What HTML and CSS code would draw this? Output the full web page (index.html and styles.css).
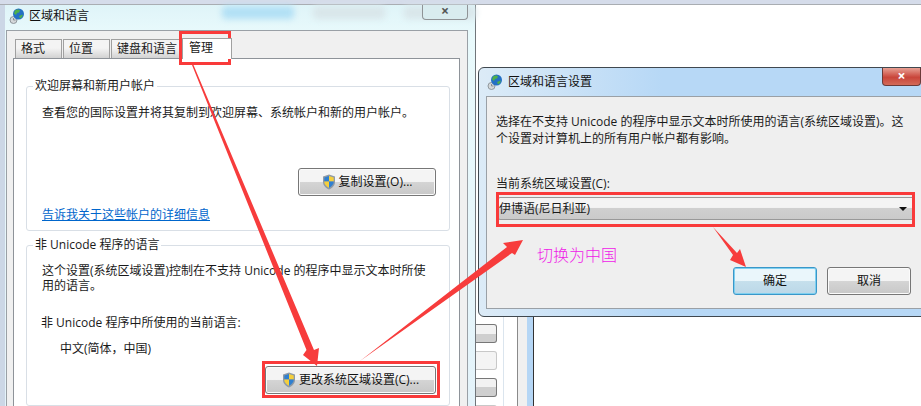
FILE: index.html
```html
<!DOCTYPE html>
<html lang="zh-CN">

<head>
  <meta charset="UTF-8">
  <meta name="viewport" content="width=device-width, initial-scale=1.0">
  <title>区域和语言</title>
  <link rel="stylesheet" href="styles.css">
</head>

<body>
  <svg width="0" height="0" class="defs">
    <defs>
      <symbol id="shield" viewBox="0 0 14 16">
        <path d="M7 .5 13 2.500V8c0 3.500-2.800 6-6 7.500C3.800 14 1 11.500 1 8V2.500Z" fill="#8f9aa6" />
        <path d="M7 2 2.300 3.500V7.500H7Z" fill="#2f7fd0" />
        <path d="M7 2 11.700 3.500V7.500H7Z" fill="#f5cf3c" />
        <path d="M2.300 7.500H7V13.800C4.500 12.500 2.300 10.500 2.300 8Z" fill="#f5cf3c" />
        <path d="M11.700 7.500H7V13.800C9.500 12.500 11.700 10.500 11.700 8Z" fill="#2f7fd0" />
      </symbol>
      <symbol id="globe" viewBox="0 0 16 16">
        <circle cx="4.500" cy="12" r="3.500" fill="#d4d8da" stroke="#8f979c" />
        <path d="M4.500 10v2h2" fill="none" stroke="#6d7478" stroke-width=".7" />
        <circle cx="9.500" cy="6" r="5.500" fill="#2470c4" />
        <path d="M6 2.500c2-1.500 4-1.500 5 0l-1 2-2 .5-1 2-2-1.500ZM10 8l3.500-1.500c.5 1-.5 3.500-2.500 4Z" fill="#4fb04a" />
      </symbol>
    </defs>
  </svg>

  <div class="desktop">
    <!-- whatever is behind the two dialogs -->
    <div class="top-band"></div>
    <div class="behind">
      <div class="strip-buttons">
        <div class="stub"></div>
        <div class="stub stub-off"></div>
        <div class="stub"></div>
        <div class="stub stub-off"></div>
      </div>
      <div class="strip-line"></div>
      <div class="strip-edge"></div>
    </div>

    <!-- main dialog -->
    <section class="window window-main">
      <div class="ghost-buttons">
        <span class="ghost ghost-blue"></span>
        <span class="ghost"></span>
        <span class="ghost"></span>
      </div>
      <div class="titlebar">
        <svg class="title-icon"><use href="#globe" /></svg>
        <span class="title-text">区域和语言</span>
        <span class="close close-idle">×</span>
      </div>
      <div class="client">
        <ul class="tabs">
          <li class="tab">格式</li>
          <li class="tab">位置</li>
          <li class="tab">键盘和语言</li>
          <li class="tab tab-active">管理</li>
        </ul>
        <div class="tab-panel">
          <fieldset class="group group-welcome">
            <legend>欢迎屏幕和新用户帐户</legend>
            <p class="group-text">查看您的国际设置并将其复制到欢迎屏幕、系统帐户和新的用户帐户。</p>
            <div class="group-action">
              <button class="btn btn-copy"><svg class="shield"><use href="#shield" /></svg>复制设置(O)...</button>
            </div>
            <a class="link" href="#">告诉我关于这些帐户的详细信息</a>
          </fieldset>
          <fieldset class="group group-unicode">
            <legend>非 Unicode 程序的语言</legend>
            <p class="group-text">这个设置(系统区域设置)控制在不支持 Unicode 的程序中显示文本时所使用的语言。</p>
            <p class="current-label">非 Unicode 程序中所使用的当前语言:</p>
            <p class="current-value">中文(简体，中国)</p>
            <div class="group-action">
              <button class="btn btn-change"><svg class="shield"><use href="#shield" /></svg>更改系统区域设置(C)...</button>
            </div>
          </fieldset>
        </div>
      </div>
    </section>

    <!-- locale dialog -->
    <section class="window window-locale">
      <div class="titlebar">
        <svg class="title-icon"><use href="#globe" /></svg>
        <span class="title-text">区域和语言设置</span>
        <span class="close">×</span>
      </div>
      <div class="client client-locale">
        <p class="locale-text">选择在不支持 Unicode 的程序中显示文本时所使用的语言(系统区域设置)。这个设置对计算机上的所有用户帐户都有影响。</p>
        <label class="locale-label">当前系统区域设置(C):</label>
        <div class="select">
          <span>伊博语(尼日利亚)</span>
          <span class="select-arrow"></span>
        </div>
        <div class="locale-buttons">
          <button class="btn btn-dialog btn-default">确定</button>
          <button class="btn btn-dialog">取消</button>
        </div>
      </div>
    </section>

    <!-- annotations drawn on top of the screenshot -->
    <div class="mark mark-tab"></div>
    <div class="mark mark-button"></div>
    <div class="mark mark-select"></div>
    <div class="note">切换为中国</div>
    <svg class="arrows" width="921" height="406" viewBox="0 0 921 406">
      <path d="M192 65 306.500 350 303 355 317 366 319 348 314 350 193.500 65Z" />
      <path d="M360 361 507 247 503 243 523 240 515 255 512 253Z" />
      <path d="M713 227 733 255 730 260 746 267 740 249 737 253Z" />
    </svg>
  </div>
</body>

</html>
```

FILE: styles.css
```css
/* Basic Reset */
* {
  margin: 0;
  padding: 0;
  box-sizing: border-box;
}

body {
  font-family: 'Open Sans', 'Noto Sans CJK SC', sans-serif;
  font-size: 12px;
  line-height: 16px;
  color: #1a1a1a;
  background-color: #fff;
  overflow: hidden;
}

.defs {
  position: absolute;
}

.desktop {
  position: relative;
  width: 921px;
  height: 406px;
  overflow: hidden;
  background-color: #fff;
}

/* Stuff behind the dialogs */
.top-band {
  position: absolute;
  left: 0;
  top: 0;
  width: 100%;
  height: 5px;
  background-color: #d5dcea;
  border-bottom: 1px solid #a9adb2;
}

.behind {
  position: absolute;
  left: 476px;
  top: 316px;
  width: 58px;
  height: 90px;
  display: flex;
}

.strip-buttons {
  width: 21px;
  padding-top: 8px;
  display: flex;
  flex-direction: column;
  gap: 8px;
  flex-shrink: 0;
}

.stub {
  height: 19px;
  flex-shrink: 0;
  border: 1px solid #777;
  border-left: none;
  border-radius: 0 3px 3px 0;
  background: linear-gradient(#f2f2f2 50%, #cfcfcf 50%);
}

.stub-off {
  border-color: #c8c8c8;
  background: #f4f4f4;
}

.strip-line {
  margin-left: 6px;
  width: 1px;
  background-color: #dbe5ee;
}

.strip-edge {
  margin-left: 13px;
  width: 17px;
  border-left: 1px solid #8a8a8a;
  border-right: 1px solid #333;
  background: linear-gradient(90deg, #f0f0f0 9px, #b5d6f5 9px);
}

/* Windows */
.window {
  position: absolute;
  display: flex;
  flex-direction: column;
}

.window-main {
  left: 0;
  top: 5px;
  width: 476px;
  height: 401px;
  padding-left: 6px;
  background: linear-gradient(#dff4f8, #e9fafc 30px, #e4f3fa);
  border-right: 1px solid #70757a;
  box-shadow: inset 5px 0 0 #ccd7e6;
}

.window-locale {
  left: 478px;
  top: 67px;
  width: 460px;
  height: 250px;
  padding: 0 0 7px 7px;
  border: 1px solid #40484f;
  border-radius: 6px 0 0 6px;
  background: linear-gradient(90deg, #dcebf7, #b7d8f6 40%);
}

.titlebar {
  display: flex;
  align-items: center;
  height: 25px;
  padding-bottom: 4px;
  flex-shrink: 0;
  gap: 4px;
  padding-left: 3px;
  position: relative;
}

.window-locale .titlebar {
  height: 28px;
  padding-bottom: 0;
  padding-left: 1px;
  gap: 5px;
}

.title-icon {
  width: 16px;
  height: 16px;
}

.title-text {
  font-size: 12px;
  color: #111;
}

.close {
  position: absolute;
  top: 0;
  left: 396px;
  width: 39px;
  height: 18px;
  border: 1px solid #6b3a38;
  border-top: none;
  border-radius: 0 0 4px 4px;
  background: linear-gradient(#e8a093, #c9453a 55%, #d36a58);
  color: #fff;
  font-size: 14px;
  line-height: 15px;
  font-weight: bold;
  text-align: center;
}

.close-idle {
  left: 416px;
  width: 46px;
  height: 15px;
  border-color: #8f9396;
  background: #d9ecef;
  color: #555;
  line-height: 12px;
}

.ghost-buttons {
  position: absolute;
  left: 222px;
  top: 1px;
  display: flex;
  gap: 19px;
}

.ghost {
  width: 72px;
  height: 13px;
  border-radius: 4px;
  background: #d9e6ea;
  filter: blur(3px);
}

.ghost-blue {
  background: #b2e0f5;
}

.client {
  flex: 1;
  background-color: #f0f0f0;
  border: 1px solid #9aa0a6;
  border-bottom: none;
  margin-right: 7px;
  padding: 7px 0 0 6px;
  display: flex;
  flex-direction: column;
  overflow: hidden;
}

/* Tabs */
.tabs {
  list-style: none;
  display: flex;
  padding-left: 2px;
  height: 20px;
  flex-shrink: 0;
  align-items: flex-end;
  gap: 1px;
}

.tab {
  height: 19px;
  padding: 0 3px 0 5px;
  min-width: 47px;
  border: 1px solid #a0a0a0;
  border-bottom: none;
  background: linear-gradient(#f4f4f4 45%, #d2d2d2);
  line-height: 18px;
}

.tab-active {
  height: 21px;
  width: 50px;
  min-width: 0;
  padding-left: 6px;
  margin-bottom: -1px;
  background: #fff;
  position: relative;
  z-index: 1;
  line-height: 17px;
}

.tab-panel {
  flex: 1;
  width: 447px;
  background-color: #fff;
  border: 1px solid #8e9399;
  border-bottom: none;
  padding: 19px 9px 0 12px;
  display: flex;
  flex-direction: column;
  gap: 6px;
}

/* Group boxes */
.group {
  border: 1px solid #d9dfe6;
  border-radius: 3px;
  padding: 0 13px 0 15px;
}

.group legend {
  margin-left: -9px;
  padding: 0 2px;
  line-height: 16px;
}

.group-welcome {
  height: 153px;
  display: flex;
  flex-direction: column;
}

.group-welcome .group-text {
  margin-top: 11px;
}

.group-welcome .group-action {
  margin-top: 47px;
}

.group-unicode {
  flex: 1;
}

.group-unicode .group-text {
  margin-top: 10px;
  width: 390px;
  line-height: 15px;
}

.group-action {
  display: flex;
  justify-content: flex-end;
}

.link {
  margin-top: 11px;
  color: #0066cc;
  text-decoration: underline;
}

.current-label {
  margin-top: 22px;
  margin-left: -1px;
}

.current-value {
  margin-top: 10px;
  margin-left: 18px;
}

/* Buttons */
.btn {
  font: inherit;
  color: #111;
  border: 1px solid #777;
  border-radius: 3px;
  background: linear-gradient(#f4f4f4 48%, #d4d4d4 52%, #c8c8c8);
  box-shadow: inset 0 0 0 1px #fbfbfb;
  display: flex;
  align-items: center;
  justify-content: center;
  gap: 3px;
}

.btn-copy {
  width: 138px;
  height: 28px;
}

.btn-change {
  width: 171px;
  height: 28px;
  margin-top: 9px;
}

.shield {
  width: 14px;
  height: 16px;
}

.btn-dialog {
  width: 84px;
  height: 28px;
}

.btn-default {
  border-color: #3a97c9;
  background: linear-gradient(#eaf6fb 48%, #c5dfec 52%, #bcd8e8);
  box-shadow: inset 0 0 0 1px #7fd0f0;
}

/* Locale dialog body */
.client-locale {
  padding: 16px 0 0 9px;
  margin-right: 0;
  border-bottom: 1px solid #9aa0a6;
  background-color: #efefef;
}

.locale-text {
  width: 417px;
  line-height: 17px;
}

.locale-label {
  margin-top: 28px;
  line-height: 18px;
}

.select {
  margin-top: 4px;
  margin-left: 2px;
  width: 416px;
  height: 23px;
  flex-shrink: 0;
  border: 1px solid #999;
  border-radius: 2px;
  background: linear-gradient(#f4f4f4 45%, #d0d0d0 50%, #cacaca);
  display: flex;
  align-items: center;
  justify-content: space-between;
  padding: 0 6px 0 0;
}

.select-arrow {
  border-left: 4px solid transparent;
  border-right: 4px solid transparent;
  border-top: 4px solid #111;
}

.locale-buttons {
  display: flex;
  gap: 10px;
  margin-top: 47px;
  margin-left: 237px;
}

/* Annotations */
.mark {
  position: absolute;
  border: 3px solid #f93a3a;
}

.mark-tab {
  left: 179px;
  top: 31px;
  width: 52px;
  height: 34px;
}

.mark-button {
  left: 262px;
  top: 361px;
  width: 178px;
  height: 37px;
}

.mark-select {
  left: 496px;
  top: 192px;
  width: 419px;
  height: 35px;
}

.note {
  position: absolute;
  left: 537px;
  top: 245px;
  font-size: 16px;
  line-height: 20px;
  font-weight: 300;
  color: #f020e8;
}

.arrows {
  position: absolute;
  left: 0;
  top: 0;
}

.arrows path {
  fill: #f73c3c;
}
```
